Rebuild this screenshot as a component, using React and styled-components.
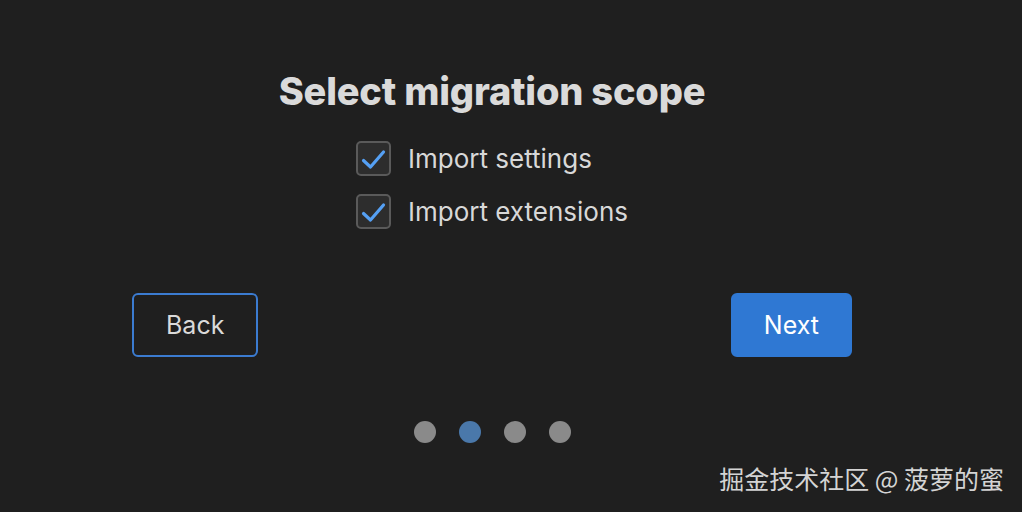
import React, { useState } from "react";
import styled, { createGlobalStyle } from "styled-components";

const GlobalStyle = createGlobalStyle`
  html, body {
    margin: 0;
    padding: 0;
    background: #1f1f1f;
  }
  body {
    font-family: Inter, "Noto Sans", sans-serif;
    color: #dcdcdc;
  }
`;

const options = [
  { id: "settings", label: "Import settings" },
  { id: "extensions", label: "Import extensions" },
];

function CheckIcon() {
  return (
    <svg width="31" height="31" viewBox="0 0 31 31" fill="none">
      <path
        d="M5.5 17.5l7 6.5L25.5 9"
        stroke="#55a0f4"
        strokeWidth="3.2"
        strokeLinecap="round"
        strokeLinejoin="round"
      />
    </svg>
  );
}

function App() {
  const [checked, setChecked] = useState({ settings: true, extensions: true });
  const step = 1;

  return (
    <Page>
      <GlobalStyle />
      <Wizard>
        <Title>Select migration scope</Title>
        <Options>
          {options.map((o) => (
            <Option key={o.id} onClick={() => setChecked({ ...checked, [o.id]: !checked[o.id] })}>
              <Box>{checked[o.id] && <CheckIcon />}</Box>
              <Label>{o.label}</Label>
            </Option>
          ))}
        </Options>
        <Actions>
          <Button $variant="outline">Back</Button>
          <Button $variant="primary">Next</Button>
        </Actions>
        <Dots>
          {[0, 1, 2, 3].map((i) => (
            <Dot key={i} $active={i === step} />
          ))}
        </Dots>
      </Wizard>
      <Footer>掘金技术社区 @ 菠萝的蜜</Footer>
    </Page>
  );
}

const Page = styled.div`
  width: 1022px;
  height: 512px;
  position: relative;
  overflow: hidden;
  background: #1f1f1f;
`;

const Wizard = styled.div`
  width: 720px;
  margin-left: 132px;
  padding-top: 67px;
  display: flex;
  flex-direction: column;
  align-items: center;
`;

const Title = styled.h1`
  margin: 0;
  font-size: 38px;
  line-height: 48px;
  font-weight: 800;
  color: #dadada;
  letter-spacing: -0.2px;
`;

const Options = styled.div`
  margin-top: 26px;
  display: flex;
  flex-direction: column;
  gap: 18px;
`;

const Option = styled.label`
  display: flex;
  align-items: center;
  gap: 17px;
  cursor: pointer;
`;

const Box = styled.span`
  width: 35px;
  height: 35px;
  box-sizing: border-box;
  border: 2px solid #5a5a5a;
  border-radius: 5px;
  background: #2d2d2d;
  display: flex;
  align-items: center;
  justify-content: center;
`;

const Label = styled.span`
  font-size: 26px;
  color: #d8d8d8;
`;

const Actions = styled.div`
  align-self: stretch;
  margin-top: 64px;
  display: flex;
  justify-content: space-between;
`;

const Button = styled.button`
  height: 64px;
  padding: 0 ${(p) => (p.$variant === "primary" ? "31px" : "32px")};
  box-sizing: border-box;
  border-radius: 6px;
  font-family: Inter, "Noto Sans", sans-serif;
  font-size: 25px;
  cursor: pointer;
  border: 2px solid ${(p) => (p.$variant === "primary" ? "#2f78d3" : "#3b7bd0")};
  background: ${(p) => (p.$variant === "primary" ? "#2f78d3" : "transparent")};
  color: ${(p) => (p.$variant === "primary" ? "#ffffff" : "#dadada")};
`;

const Dots = styled.div`
  margin-top: 64px;
  display: flex;
  gap: 23px;
`;

const Dot = styled.span`
  width: 22px;
  height: 22px;
  border-radius: 50%;
  background: ${(p) => (p.$active ? "#4a78aa" : "#8a8a8a")};
`;

const Footer = styled.div`
  position: absolute;
  right: 18px;
  bottom: 16px;
  font-family: "Noto Sans CJK SC", "Noto Sans", sans-serif;
  font-size: 25px;
  color: #d4d4d4;
`;

export default App;
